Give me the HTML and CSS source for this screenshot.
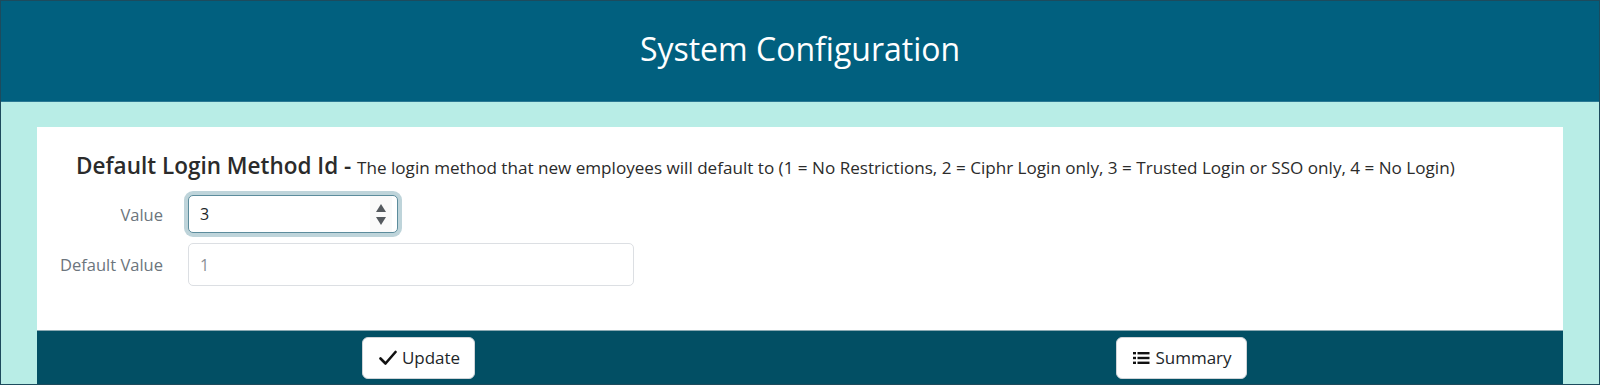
FILE: index.html
```html
<!DOCTYPE html>
<html lang="en">
<head>
    <meta charset="UTF-8">
    <title>System Configuration</title>
    <link rel="stylesheet" href="styles.css">
</head>
<body>
    <div class="frame">
        <header class="topbar">
            <h1>System Configuration</h1>
        </header>

        <div class="content">
            <div class="card">
                <div class="card-body">
                    <h2 class="setting-title">Default Login Method Id - <span class="setting-desc">The login method that new employees will default to (1 = No Restrictions, 2 = Ciphr Login only, 3 = Trusted Login or SSO only, 4 = No Login)</span></h2>

                    <div class="form-grid">
                        <label class="field-label" for="value">Value</label>
                        <div class="field-box focused short">
                            <input id="value" class="field-input" type="text" value="3">
                            <span class="spinner">
                                <span class="arrow up"></span>
                                <span class="arrow down"></span>
                            </span>
                        </div>

                        <label class="field-label" for="default">Default Value</label>
                        <div class="field-box readonly">
                            <input id="default" class="field-input" type="text" value="1" readonly>
                        </div>
                    </div>
                </div>

                <div class="card-footer">
                    <div class="btn-cell">
                        <button class="btn">
                            <svg class="icon" width="18" height="16" viewBox="0 0 18 16">
                                <path d="M1.5 8.5 L6.5 13.5 L16.5 2" fill="none" stroke="#111" stroke-width="2.6" stroke-linecap="round" stroke-linejoin="round"/>
                            </svg>
                            Update
                        </button>
                    </div>
                    <div class="btn-cell">
                        <button class="btn">
                            <svg class="icon" width="17" height="14" viewBox="0 0 17 14">
                                <rect x="0" y="1" width="3" height="2.4" fill="#111"/>
                                <rect x="0" y="5.8" width="3" height="2.4" fill="#111"/>
                                <rect x="0" y="10.6" width="3" height="2.4" fill="#111"/>
                                <rect x="4.5" y="1" width="12" height="2.4" fill="#111"/>
                                <rect x="4.5" y="5.8" width="12" height="2.4" fill="#111"/>
                                <rect x="4.5" y="10.6" width="12" height="2.4" fill="#111"/>
                            </svg>
                            Summary
                        </button>
                    </div>
                </div>
            </div>
        </div>
    </div>
</body>
</html>
```

FILE: styles.css
```css
body {
    margin: 0;
    font-family: "Open Sans", "Noto Sans", sans-serif;
    color: #212529;
}

.frame {
    box-sizing: border-box;
    height: 385px;
    border: 1px solid #1d4b5d;
    background: #b8ede6;
    display: flex;
    flex-direction: column;
}

.topbar {
    box-sizing: border-box;
    height: 101px;
    padding-bottom: 6px;
    background: #01607f;
    border-bottom: 1px solid #2a7893;
    display: flex;
    align-items: center;
    justify-content: center;
}

.topbar h1 {
    margin: 0;
    font-size: 32px;
    font-weight: 400;
    color: #ffffff;
}

.content {
    flex: 1;
    padding: 25px 36px 0 36px;
    display: flex;
}

.card {
    flex: 1;
    background: #ffffff;
    display: flex;
    flex-direction: column;
}

.card-body {
    flex: 1;
    padding: 23px 0 0 0;
}

.setting-title {
    margin: 0;
    padding-left: 39px;
    font-size: 22.5px;
    font-weight: 600;
    line-height: 32px;
    color: #2b2b2b;
}

.setting-desc {
    font-size: 17.1px;
    font-weight: 400;
    color: #2b2b2b;
}

.form-grid {
    display: grid;
    grid-template-columns: 126px auto;
    column-gap: 25px;
    row-gap: 10px;
    margin-top: 11px;
    align-items: center;
}

.field-label {
    text-align: right;
    white-space: nowrap;
    font-size: 16.5px;
    color: #6c757d;
}

.field-box {
    box-sizing: border-box;
    width: 446px;
    height: 43px;
    border: 1px solid #dcdfe3;
    border-radius: 5px;
    display: flex;
    align-items: center;
    background: #fff;
}

.field-box.short {
    width: 210px;
    height: 38px;
}

.field-box.focused {
    border-color: #5c8c9c;
    box-shadow: 0 0 0 4px #bed4da;
}

.field-input {
    flex: 1;
    min-width: 0;
    border: none;
    outline: none;
    background: transparent;
    padding: 0 0 0 11px;
    font-family: inherit;
    font-size: 16px;
    color: #212529;
}

.readonly .field-input {
    color: #8a9096;
}

.spinner {
    width: 22px;
    height: 100%;
    display: flex;
    flex-direction: column;
    align-items: center;
    justify-content: center;
    gap: 5px;
    margin-right: 5px;
    background: #fafafa;
}

.arrow {
    width: 0;
    height: 0;
    border-left: 5px solid transparent;
    border-right: 5px solid transparent;
}

.arrow.up {
    border-bottom: 8px solid #555a5f;
}

.arrow.down {
    border-top: 8px solid #555a5f;
}

.card-footer {
    height: 54px;
    box-sizing: border-box;
    background: #024f64;
    border-top: 1px solid #8aa9b2;
    display: grid;
    grid-template-columns: 1fr 1fr;
    align-items: center;
}

.btn-cell {
    display: flex;
    justify-content: center;
}

.btn {
    height: 42px;
    padding: 0 14px 0 16px;
    background: #ffffff;
    border: 1px solid #d0d4d8;
    border-radius: 6px;
    display: flex;
    align-items: center;
    gap: 5px;
    font-family: inherit;
    font-size: 17px;
    color: #212529;
}

.icon {
    display: block;
}
```
